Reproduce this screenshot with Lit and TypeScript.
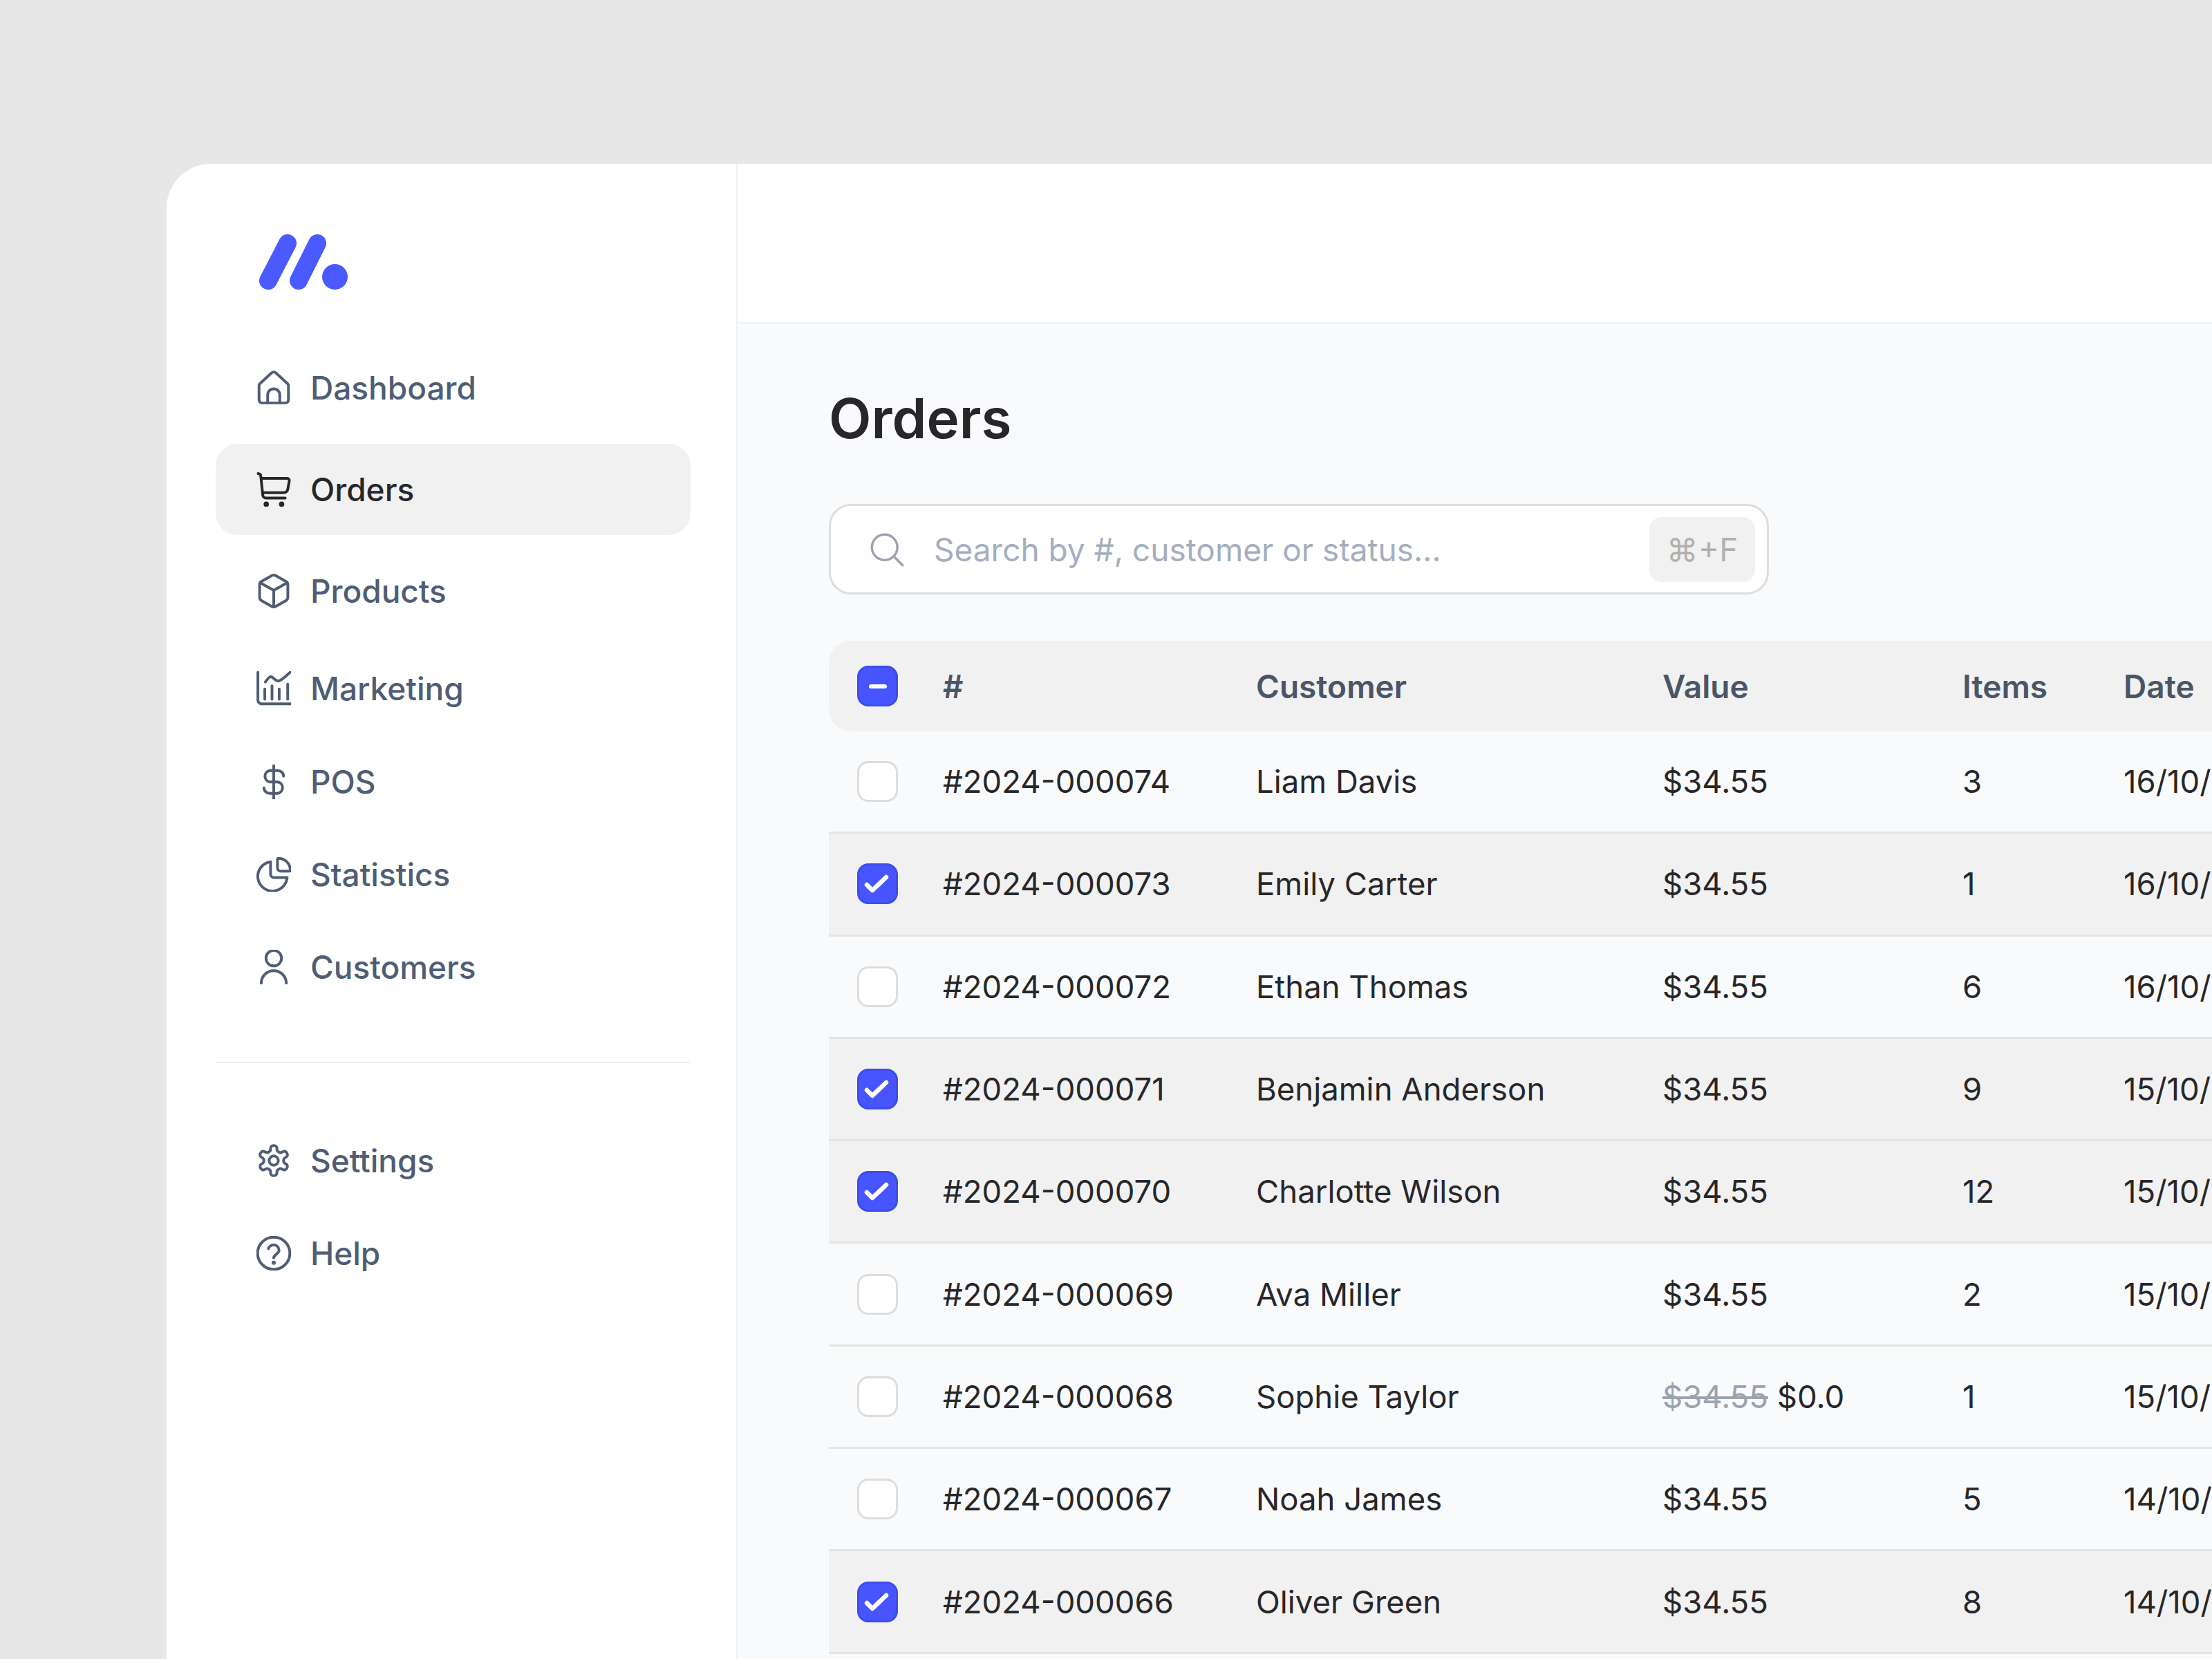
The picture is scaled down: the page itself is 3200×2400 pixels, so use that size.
import {css, html, LitElement, svg} from "lit";
import {customElement} from "lit/decorators.js";

interface NavItem {
  label: string;
  icon: unknown;
  cls: string;
  active?: boolean;
}

interface Order {
  id: string;
  customer: string;
  items: number;
  date: string;
  checked?: boolean;
  discount?: boolean;
}

const ICONS = {
  home: svg`<path d="M1.800 10.600V20.500a2 2 0 0 0 2 2h16.400a2 2 0 0 0 2-2V10.600a2 2 0 0 0-.6-1.500L13.400 1.600a2 2 0 0 0-2.800 0L2.400 9.100a2 2 0 0 0-.6 1.500z"/><path d="M7.800 22.500v-5.600a4.200 4.200 0 0 1 8.400 0v5.600"/>`,
  cart: svg`<path d="M1.200 1l.8.3a1.600 1.600 0 0 1 1 1.400L4.400 16a2.200 2.200 0 0 0 2.200 2H20"/><path d="M3.400 4.300h17.800a1.600 1.600 0 0 1 1.600 1.900l-1 5.500a3 3 0 0 1-3 2.600H4.500"/><circle cx="6.800" cy="22.300" r=".9" fill="currentColor"/><circle cx="17.500" cy="22.300" r=".9" fill="currentColor"/>`,
  box: svg`<path d="M10.600 1.300a2.800 2.800 0 0 1 2.800 0l7 4a2.800 2.800 0 0 1 1.400 2.400v8.600a2.800 2.800 0 0 1-1.400 2.400l-7 4a2.800 2.800 0 0 1-2.800 0l-7-4a2.800 2.800 0 0 1-1.400-2.400V7.700a2.800 2.800 0 0 1 1.400-2.400z"/><path d="M2.600 6.200L12 11.500l9.400-5.300M12 11.500V23"/>`,
  chart: svg`<path d="M1 .8V20a2.700 2.700 0 0 0 2.700 2.700H23.800"/><path d="M6.200 7.500C7.500 5.500 8.800 3.800 10 3.800c1.600 0 2.800 3 5 3 2.500 0 5-3.300 8.500-6"/><path d="M5.800 12.400v7M10.800 10.200v9.200M15.800 12.400v7M21.700 9v10.400"/>`,
  dollar: svg`<path d="M12 .8v23.400"/><path d="M18.800 8c0-2.200-1.800-3.800-4-3.800H9.400a4 4 0 0 0-.2 7.900h5.600a4 4 0 0 1-.1 7.900H9.300c-2.200 0-4.100-1.600-4.100-3.800"/>`,
  pie: svg`<path d="M9.800 3.200A10.200 10.200 0 1 0 21.300 14.200H12.300a2.500 2.500 0 0 1-2.500-2.500z"/><path d="M15.500 .8a8.300 8.300 0 0 1 8 8 .9.9 0 0 1-.9.9h-5.700a2.300 2.300 0 0 1-2.300-2.300V1.600a.8.8 0 0 1 .9-.8z"/>`,
  user: svg`<circle cx="12" cy="5.800" r="5.400"/><path d="M3.300 23.200a8.700 8.700 0 0 1 17.400 0"/>`,
  gear: svg`<path d="M12.220 1.500h-.44a2 2 0 0 0-2 2v.68a2 2 0 0 1-1 1.730l-.43.250a2 2 0 0 1-2 0l-.65-.330a2 2 0 0 0-2.730.730l-.22.380a2 2 0 0 0 .73 2.730l.65.350a2 2 0 0 1 1 1.720v.510a2 2 0 0 1-1 1.740l-.65.340a2 2 0 0 0-.73 2.730l.22.380a2 2 0 0 0 2.730.730l.65-.330a2 2 0 0 1 2 0l.43.250a2 2 0 0 1 1 1.730v.68a2 2 0 0 0 2 2h.44a2 2 0 0 0 2-2v-.68a2 2 0 0 1 1-1.730l.43-.250a2 2 0 0 1 2 0l.65.330a2 2 0 0 0 2.730-.730l.22-.390a2 2 0 0 0-.73-2.730l-.65-.330a2 2 0 0 1-1-1.740v-.5a2 2 0 0 1 1-1.740l.65-.340a2 2 0 0 0 .73-2.730l-.22-.380a2 2 0 0 0-2.730-.730l-.65.330a2 2 0 0 1-2 0l-.43-.250a2 2 0 0 1-1-1.730V3.500a2 2 0 0 0-2-2z"/><circle cx="12" cy="12" r="3.200"/>`,
  help: svg`<circle cx="12" cy="12" r="11.200"/><path d="M8.300 8.800a3.800 3.800 0 0 1 7.400 1.200c0 2.500-3.700 3-3.700 5.200"/><circle cx="12" cy="18.600" r=".5" fill="currentColor"/>`,
};

const NAV_TOP: NavItem[] = [
  {label: "Dashboard", icon: ICONS.home, cls: ""},
  {label: "Orders", icon: ICONS.cart, cls: "mt16 tall", active: true},
  {label: "Products", icon: ICONS.box, cls: "mt15"},
  {label: "Marketing", icon: ICONS.chart, cls: "mt10"},
  {label: "POS", icon: ICONS.dollar, cls: "mt4"},
  {label: "Statistics", icon: ICONS.pie, cls: "mt3"},
  {label: "Customers", icon: ICONS.user, cls: "mt3"},
];

const NAV_BOTTOM: NavItem[] = [
  {label: "Settings", icon: ICONS.gear, cls: ""},
  {label: "Help", icon: ICONS.help, cls: "mt3"},
];

const ORDERS: Order[] = [
  {id: "#2024-000074", customer: "Liam Davis", items: 3, date: "16/10/2024"},
  {id: "#2024-000073", customer: "Emily Carter", items: 1, date: "16/10/2024", checked: true},
  {id: "#2024-000072", customer: "Ethan Thomas", items: 6, date: "16/10/2024"},
  {id: "#2024-000071", customer: "Benjamin Anderson", items: 9, date: "15/10/2024", checked: true},
  {id: "#2024-000070", customer: "Charlotte Wilson", items: 12, date: "15/10/2024", checked: true},
  {id: "#2024-000069", customer: "Ava Miller", items: 2, date: "15/10/2024"},
  {id: "#2024-000068", customer: "Sophie Taylor", items: 1, date: "15/10/2024", discount: true},
  {id: "#2024-000067", customer: "Noah James", items: 5, date: "14/10/2024"},
  {id: "#2024-000066", customer: "Oliver Green", items: 8, date: "14/10/2024", checked: true},
];

@customElement("app-root")
export class AppRoot extends LitElement {
  static styles = css`
    :host {
      display: block;
      width: 3200px;
      height: 2400px;
      overflow: hidden;
      box-sizing: border-box;
      padding: 237px 0 0 241px;
      background: #e7e7e7;
      font-family: Inter, "Noto Sans", sans-serif;
      font-size: 46px;
      color: #27272a;
    }

    .frame {
      display: flex;
      width: 2959px;
      height: 2163px;
      background: #fff;
      border-radius: 64px 0 0 0;
      overflow: hidden;
    }

    .sidebar {
      flex: none;
      box-sizing: border-box;
      width: 826px;
      padding: 102px 66px 0 71px;
      border-right: 2px solid #f0f1f3;
    }

    .logo {
      display: block;
      width: 130px;
      height: 82px;
      margin: 0 0 0 62px;
    }

    .nav {
      display: flex;
      flex-direction: column;
      margin-top: 74px;
    }

    .nav.bottom {
      margin-top: 0;
    }

    .nav-item {
      display: flex;
      align-items: center;
      gap: 28px;
      height: 131px;
      padding-left: 59px;
      border-radius: 32px;
      color: #4f5d75;
      font-weight: 500;
    }

    .nav-item.tall {
      height: 132px;
    }

    .nav-item.active {
      background: #f1f1f1;
      color: #27272a;
    }

    .nav-item svg {
      flex: none;
      width: 50px;
      height: 50px;
      fill: none;
      stroke: currentColor;
      stroke-width: 1.9;
      stroke-linecap: round;
      stroke-linejoin: round;
    }

    .mt16 { margin-top: 16px; }
    .mt15 { margin-top: 15px; }
    .mt10 { margin-top: 10px; }
    .mt4 { margin-top: 4px; }
    .mt3 { margin-top: 3px; }

    .divider {
      height: 2px;
      margin: 72px 0 75px;
      background: #ececee;
    }

    .main {
      flex: 1;
      min-width: 0;
      display: flex;
      flex-direction: column;
      background: #f9fafb;
    }

    .topbar {
      flex: none;
      height: 229px;
      background: #fff;
      border-bottom: 2px solid #f0f1f3;
    }

    .content {
      padding: 84px 0 0 132px;
    }

    h1 {
      margin: 0;
      font-size: 80px;
      line-height: 106px;
      font-weight: 600;
      color: #27272a;
    }

    .search {
      display: flex;
      align-items: center;
      box-sizing: border-box;
      width: 1360px;
      height: 131px;
      margin-top: 71px;
      padding: 0 17px 0 55px;
      background: #fff;
      border: 3px solid #dcdddf;
      border-radius: 32px;
    }

    .search svg {
      flex: none;
      width: 52px;
      height: 52px;
      fill: none;
      stroke: #9ca3af;
      stroke-width: 1.6;
      stroke-linecap: round;
    }

    .placeholder {
      flex: 1;
      margin-left: 42px;
      color: #a4aebf;
    }

    .kbd {
      flex: none;
      display: flex;
      align-items: center;
      justify-content: center;
      width: 153px;
      height: 94px;
      border-radius: 18px;
      background: #f1f1f1;
      color: #b0b0b0;
    }

    .table {
      width: 2400px;
      margin-top: 67px;
    }

    .row {
      display: grid;
      grid-template-columns: 165px 453px 588px 434px 233px 1fr;
      align-items: center;
      box-sizing: border-box;
      height: 148.300px;
      border-bottom: 3px solid #e4e4e4;
      font-size: 45.500px;
      white-space: nowrap;
    }

    .row.head {
      height: 131px;
      background: #f1f1f1;
      border-bottom: none;
      border-radius: 32px 0 0 32px;
      color: #4b5568;
      font-size: 46px;
      font-weight: 600;
    }

    .row.checked {
      background: #f1f1f1;
    }

    .cell-check {
      padding-left: 41px;
    }

    .checkbox {
      display: flex;
      align-items: center;
      justify-content: center;
      box-sizing: border-box;
      width: 59px;
      height: 59px;
      background: #fff;
      border: 3px solid #dcdddf;
      border-radius: 16px;
    }

    .checkbox.on {
      background: #4655ff;
      border-color: #3e4de8;
    }

    .checkbox svg {
      width: 53px;
      height: 53px;
      fill: none;
      stroke: #fff;
      stroke-width: 6.500;
      stroke-linecap: round;
      stroke-linejoin: round;
    }

    .minus {
      width: 26px;
      height: 6px;
      border-radius: 3px;
      background: #fff;
    }

    .old {
      color: #9ca3af;
      text-decoration: line-through;
    }
  `;

  private renderNavItem(item: NavItem) {
    return html`
      <div class="nav-item ${item.cls} ${item.active ? "active" : ""}">
        <svg viewBox="0 0 24 24">${item.icon}</svg>
        <span>${item.label}</span>
      </div>
    `;
  }

  private renderValue(order: Order) {
    if (order.discount) {
      return html`<span class="old">$34.55</span> $0.0`;
    }
    return "$34.55";
  }

  private renderRow(order: Order) {
    return html`
      <div class="row ${order.checked ? "checked" : ""}">
        <div class="cell-check">
          ${order.checked
            ? html`<div class="checkbox on"><svg viewBox="0 0 53 53"><path d="M11 28l8 8 20-19"/></svg></div>`
            : html`<div class="checkbox"></div>`}
        </div>
        <div>${order.id}</div>
        <div>${order.customer}</div>
        <div>${this.renderValue(order)}</div>
        <div>${order.items}</div>
        <div>${order.date}</div>
      </div>
    `;
  }

  render() {
    return html`
      <div class="frame">
        <aside class="sidebar">
          <svg class="logo" viewBox="0 0 130 82">
            <g stroke="#4a5aff" stroke-width="26" stroke-linecap="round" fill="none">
              <path d="M14 67L42 13"/>
              <path d="M58 67L85 13"/>
            </g>
            <circle cx="110.500" cy="61.500" r="18.500" fill="#4a5aff"/>
          </svg>
          <nav class="nav">${NAV_TOP.map((i) => this.renderNavItem(i))}</nav>
          <div class="divider"></div>
          <nav class="nav bottom">${NAV_BOTTOM.map((i) => this.renderNavItem(i))}</nav>
        </aside>
        <main class="main">
          <div class="topbar"></div>
          <div class="content">
            <h1>Orders</h1>
            <div class="search">
              <svg viewBox="0 0 24 24"><circle cx="10.500" cy="10.500" r="8.500"/><path d="M17 17l5.500 5.500"/></svg>
              <div class="placeholder">Search by #, customer or status...</div>
              <div class="kbd">⌘+F</div>
            </div>
            <div class="table">
              <div class="row head">
                <div class="cell-check"><div class="checkbox on"><div class="minus"></div></div></div>
                <div>#</div>
                <div>Customer</div>
                <div>Value</div>
                <div>Items</div>
                <div>Date</div>
              </div>
              ${ORDERS.map((o) => this.renderRow(o))}
            </div>
          </div>
        </main>
      </div>
    `;
  }
}
